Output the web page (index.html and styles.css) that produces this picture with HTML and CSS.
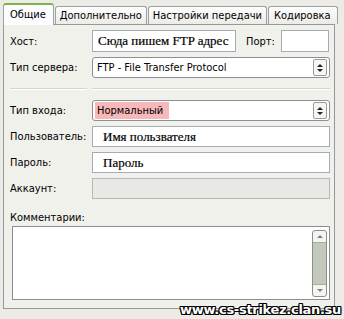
FILE: index.html
```html
<!DOCTYPE html>
<html lang="ru">
<head>
<meta charset="UTF-8" />
<title>Сайт FTP</title>
<link rel="stylesheet" href="styles.css">
</head>
<body>
  <div class="tabs">
    <div class="tab active">Общие</div>
    <div class="tab">Дополнительно</div>
    <div class="tab">Настройки передачи</div>
    <div class="tab">Кодировка</div>
  </div>

  <div class="panel">
    <div class="row first">
      <span class="label">Хост:</span>
      <div class="field host serif">Сюда пишем FTP адрес</div>
      <span class="port-label">Порт:</span>
      <div class="field port"></div>
    </div>

    <div class="row">
      <span class="label">Тип сервера:</span>
      <div class="select">
        <span class="value">FTP - File Transfer Protocol</span>
        <span class="spin"><i class="up"></i><i class="down"></i></span>
      </div>
    </div>

    <div class="separator"><span></span><span></span></div>

    <div class="row">
      <span class="label">Тип входа:</span>
      <div class="select">
        <span class="value"><span class="marked">Нормальный</span></span>
        <span class="spin"><i class="up"></i><i class="down"></i></span>
      </div>
    </div>

    <div class="row">
      <span class="label">Пользователь:</span>
      <div class="field wide serif">Имя пользвателя</div>
    </div>

    <div class="row">
      <span class="label">Пароль:</span>
      <div class="field wide serif">Пароль</div>
    </div>

    <div class="row">
      <span class="label">Аккаунт:</span>
      <div class="field wide disabled"></div>
    </div>

    <div class="comments-label">Комментарии:</div>
    <div class="textarea">
      <div class="scrollbar">
        <div class="sb-btn"><i class="up"></i></div>
        <div class="sb-track"></div>
        <div class="sb-btn"><i class="down"></i></div>
      </div>
    </div>
  </div>

  <div class="watermark">www.cs-strikez.clan.su</div>
</body>
</html>
```

FILE: styles.css
```css
body {
  margin: 0;
  background: #ecebe5;
  font-family: "DejaVu Sans Condensed", "DejaVu Sans", sans-serif;
  font-size: 11px;
  color: #000;
  width: 344px;
  height: 319px;
  position: relative;
  overflow: hidden;
}
.tabs {
  display: flex;
  padding: 3px 0 0 3px;
  height: 21px;
  align-items: flex-end;
}
.tab {
  height: 17px;
  line-height: 17px;
  padding: 0 4px;
  margin-right: 1px;
  border: 1px solid #9aa3a4;
  border-bottom: none;
  border-radius: 3px 3px 0 0;
  background: linear-gradient(#fefefe, #ecebe6);
  white-space: nowrap;
}
.tab:last-child {
  padding: 0 6px 0 5px;
}
.tab.active {
  height: 20px;
  line-height: 20px;
  padding: 0 7px 0 6px;
  background: #fcfcfe;
  border-top: 2px solid #7db24d;
  position: relative;
  margin-bottom: -1px;
  z-index: 2;
}
.panel {
  margin-left: 3px;
  width: 332px;
  height: 285px;
  border: 1px solid #919b9c;
  background: #f1f1ec;
  padding: 5px 4px 0 6px;
  box-sizing: border-box;
}
.row {
  display: flex;
  align-items: center;
  height: 21px;
  margin-top: 5px;
}
.row.first {
  height: 22px;
  margin-top: 0;
}
.label {
  width: 82px;
  flex: none;
}
.field {
  height: 100%;
  box-sizing: border-box;
  border: 1px solid #a5acb5;
  background: #fff;
  padding: 0 5px;
  display: flex;
  align-items: center;
}
.serif {
  font-family: "Liberation Serif", serif;
  font-size: 13px;
  -webkit-text-stroke: 0.2px #000;
}
.host {
  width: 144px;
}
.port-label {
  margin-left: 10px;
  width: 35px;
}
.port {
  width: 48px;
}
.wide {
  flex: 1;
  padding-left: 10px;
}
.disabled {
  background: #e8e8e4;
  border-color: #b3b8bd;
}
.select {
  flex: 1;
  height: 100%;
  box-sizing: border-box;
  border: 1px solid #8c9096;
  border-radius: 3px;
  background: #fff;
  display: flex;
  align-items: center;
  padding-left: 4px;
}
.value {
  flex: 1;
}
.marked {
  display: inline-block;
  background: #f6b8b8;
  padding: 2px 2px;
  margin-left: -2px;
  height: 13px;
  line-height: 13px;
  width: 70px;
}
.spin {
  width: 12px;
  height: 15px;
  margin-right: 2px;
  border: 1px solid #9a9a9a;
  border-radius: 2px;
  background: #f6f6f4;
  display: flex;
  flex-direction: column;
  align-items: center;
  justify-content: center;
  gap: 2px;
}
i.up, i.down {
  display: block;
  width: 0;
  height: 0;
  border-left: 3px solid transparent;
  border-right: 3px solid transparent;
}
i.up { border-bottom: 3px solid #222; }
i.down { border-top: 3px solid #222; }
.separator {
  display: flex;
  gap: 5px;
  margin: 10px 0 11px;
  height: 1px;
}
.separator span {
  background: #d5d5cf;
  border-bottom: 1px solid #fff;
  height: 1px;
}
.separator span:first-child { width: 77px; }
.separator span:last-child { flex: 1; }
.comments-label {
  margin-top: 12px;
  height: 13px;
  line-height: 13px;
}
.textarea {
  margin-top: 2px;
  margin-left: 2px;
  height: 74px;
  box-sizing: border-box;
  border: 1px solid #8a8f95;
  background: #fff;
  display: flex;
  justify-content: flex-end;
  padding: 3px 2px 2px 0;
}
.scrollbar {
  width: 13px;
  border: 1px solid #8d8f8a;
  border-radius: 3px;
  display: flex;
  flex-direction: column;
  background: #f4f4f0;
}
.sb-btn {
  height: 11px;
  display: flex;
  align-items: center;
  justify-content: center;
}
.sb-btn i.up { border-bottom-color: #7d8288; }
.sb-btn i.down { border-top-color: #7d8288; }
.sb-track {
  flex: 1;
  background: #c3c8bd;
  border-top: 1px solid #a9ada4;
  border-bottom: 1px solid #a9ada4;
}
.watermark {
  position: absolute;
  right: 3px;
  bottom: 2px;
  font-family: "DejaVu Sans", Verdana, sans-serif;
  font-weight: bold;
  font-size: 13px;
  letter-spacing: -0.3px;
  color: #fff;
  text-shadow: 1px 0 0 #000, -1px 0 0 #000, 0 1px 0 #000, 0 -1px 0 #000,
    1px 1px 0 #000, -1px -1px 0 #000, 1px -1px 0 #000, -1px 1px 0 #000;
}
```
